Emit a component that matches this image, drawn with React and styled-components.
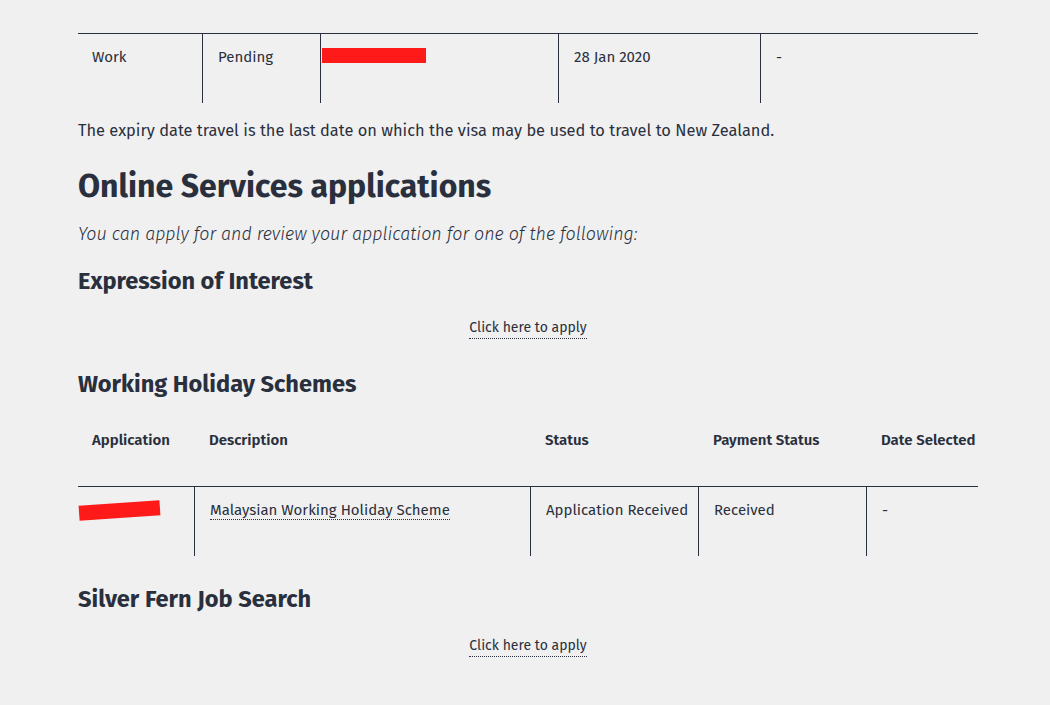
import React from "react";
import styled, { createGlobalStyle } from "styled-components";

const GlobalStyle = createGlobalStyle`
  html, body {
    margin: 0;
    padding: 0;
    background: #f0f0f0;
  }
  body {
    font-family: "Fira Sans", "Noto Sans", sans-serif;
    color: #2a2f3d;
  }
`;

const Page = styled.div`
  width: 900px;
  margin-left: 78px;
  padding: 33px 0 40px;
`;

const Table = styled.div`
  display: grid;
  grid-template-columns: ${(p) => p.cols};
  margin-top: ${(p) => p.top || 0}px;
  font-size: 15px;
  line-height: 20px;
`;

const Cell = styled.div`
  position: relative;
  padding: 13px 15px 36px;
  border-top: ${(p) => (p.head ? "none" : "1px solid #2a2f3d")};
  border-left: ${(p) => (p.first || p.head ? "none" : "1px solid #2a2f3d")};
  font-weight: ${(p) => (p.head ? 600 : 400)};
  white-space: nowrap;
  &:nth-child(5n + 1) {
    padding-left: 14px;
  }
`;

const Redact = styled.span`
  position: absolute;
  background: #ff1a1a;
  left: ${(p) => p.x}px;
  top: ${(p) => p.y}px;
  width: ${(p) => p.w}px;
  height: ${(p) => p.h}px;
  transform: rotate(${(p) => p.r || 0}deg);
`;

const Note = styled.p`
  margin: 17px 0 0;
  font-size: 16.4px;
  line-height: 22px;
`;

const H1 = styled.h1`
  margin: 26px 0 0;
  font-size: 32px;
  line-height: 36px;
  font-weight: 700;
`;

const Intro = styled.p`
  margin: 19px 0 0;
  font-size: 17.9px;
  line-height: 22px;
  font-style: italic;
  font-weight: 300;
`;

const H3 = styled.h3`
  margin: ${(p) => p.top}px 0 0;
  font-size: 23.6px;
  line-height: 28px;
  font-weight: 700;
`;

const ApplyRow = styled.div`
  display: flex;
  justify-content: center;
  margin-top: 23px;
`;

const ApplyLink = styled.a`
  font-size: 14px;
  line-height: 20px;
  color: #2a2f3d;
  text-decoration: none;
  border-bottom: 1px dotted #2a2f3d;
  cursor: pointer;
`;

const DottedLink = styled.a`
  color: #2a2f3d;
  text-decoration: none;
  border-bottom: 1px dotted #2a2f3d;
`;

export default function App() {
  const visaCols = "124px 118px 238px 202px 218px";
  const whsCols = "116px 336px 168px 168px 112px";
  return (
    <>
      <GlobalStyle />
      <Page>
        <Table cols={visaCols}>
          <Cell first>Work</Cell>
          <Cell>Pending</Cell>
          <Cell>
            <Redact x={1} y={14} w={104} h={15} />
          </Cell>
          <Cell>28 Jan 2020</Cell>
          <Cell>-</Cell>
        </Table>

        <Note>
          The expiry date travel is the last date on which the visa may be used to travel to New Zealand.
        </Note>

        <H1>Online Services applications</H1>
        <Intro>You can apply for and review your application for one of the following:</Intro>

        <H3 top={22}>Expression of Interest</H3>
        <ApplyRow>
          <ApplyLink>Click here to apply</ApplyLink>
        </ApplyRow>

        <H3 top={31}>Working Holiday Schemes</H3>
        <Table cols={whsCols} top={19}>
          <Cell head>Application</Cell>
          <Cell head>Description</Cell>
          <Cell head>Status</Cell>
          <Cell head>Payment Status</Cell>
          <Cell head>Date Selected</Cell>
          <Cell first>
            <Redact x={1} y={16} w={81} h={15} r={-4} />
          </Cell>
          <Cell>
            <DottedLink>Malaysian Working Holiday Scheme</DottedLink>
          </Cell>
          <Cell>Application Received</Cell>
          <Cell>Received</Cell>
          <Cell>-</Cell>
        </Table>

        <H3 top={29}>Silver Fern Job Search</H3>
        <ApplyRow>
          <ApplyLink>Click here to apply</ApplyLink>
        </ApplyRow>
      </Page>
    </>
  );
}
